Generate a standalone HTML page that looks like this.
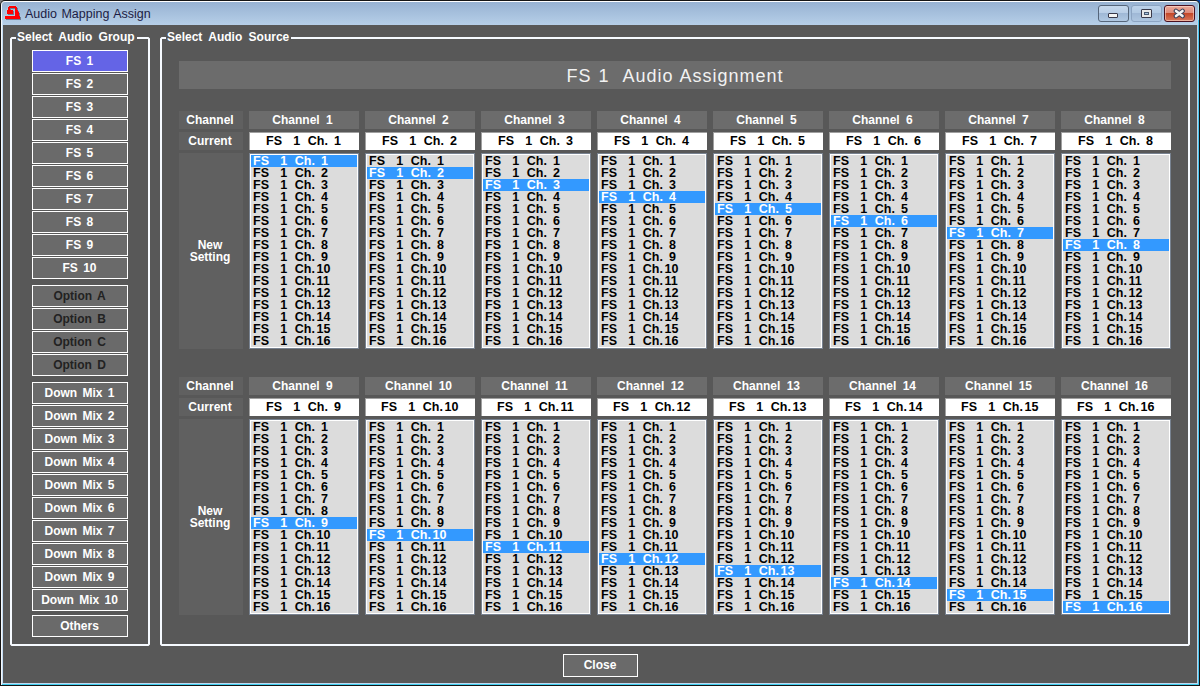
<!DOCTYPE html><html><head><meta charset="utf-8"><style>
*{box-sizing:border-box;margin:0;padding:0}
html,body{width:1200px;height:686px;overflow:hidden;background:#808080}
body{position:relative;font-family:"Liberation Sans",sans-serif}
.a{position:absolute}
#win{left:0;top:0;width:1200px;height:686px;background:#141414;border-radius:5px 5px 0 0}
#tb{left:1px;top:1px;width:1198px;height:24px;border-radius:4px 4px 0 0;border-top:1px solid #fff;border-left:1px solid #f8fbff;border-right:1px solid #a8e4f4;background:linear-gradient(#97b2d2,#b6cfe8);}
#frameL{left:1px;top:20px;width:2px;height:665px;background:linear-gradient(90deg,#f4f8fc 50%,#c4dcf4 50%)}
#frameR{left:1197px;top:20px;width:2px;height:665px;background:linear-gradient(90deg,#c4d4e4 50%,#44c4f0 50%)}
#frameB{left:2px;top:683px;width:1196px;height:2px;background:linear-gradient(#c0d8f0 50%,#40d0f0 50%)}
#content{left:3px;top:25px;width:1194px;height:658px;background:#585858}
.title{left:25px;top:6px;font-size:12.5px;word-spacing:1px;color:#1c1c44;line-height:16px;white-space:nowrap}
.gb{border:2px solid #fff;border-radius:3px}
.leg{font-weight:bold;word-spacing:3px;font-size:12px;color:#fff;line-height:14px;background:#585858;white-space:nowrap;padding:0 2px 0 1px}
.btn{left:32px;width:96px;word-spacing:2px;padding-right:1px;height:22px;border:1px solid #fff;background:#6a6a6a;color:#fff;font-weight:bold;font-size:12px;line-height:20px;text-align:center;white-space:pre}
.dis{color:#222}
.cell{padding-right:2px;word-spacing:2px;background:#606060;color:#fff;font-weight:bold;font-size:12px;text-align:center;white-space:pre}
.hdr{padding-right:3px;word-spacing:3px;background:#6c6c6c;color:#fff;font-weight:bold;font-size:12px;line-height:18px;text-align:center;white-space:pre}
.cur{background:#fff;border-left:1px solid #a0a0a0;border-top:1px solid #a0a0a0;color:#000;font-weight:bold;font-size:12.5px;line-height:12px;padding-top:2px;white-space:pre}
.list{background:#dcdcdc;border:1px solid #788290;box-shadow:inset 0 0 0 1px #fff;padding:1px}
.row{height:12px;line-height:12px;font-weight:bold;font-size:12.5px;color:#000;padding-left:2px;white-space:pre}
.p{display:inline-block;width:27.2px}.q{display:inline-block;width:14.6px}.r{display:inline-block;width:21.7px}.r1{display:inline-block;width:26.2px}
.row.s{background:#3399ff;color:#fff}
</style></head><body><div class="a" style="left:1192px;top:0;width:8px;height:8px;background:#0848a8"></div>
<div class="a" id="win"></div>
<div class="a" id="tb"></div>
<div class="a" id="frameL"></div><div class="a" id="frameR"></div><div class="a" id="frameB"></div>
<div class="a" id="content"></div>
<svg class="a" style="left:0;top:0" width="24" height="24" viewBox="0 0 24 24"><path d="M9,6 H16 V7 H17 V10 H18 V12 H19 V16 H20 V19 H5 V16 H15 V8 H10 V10 H13 V14 H7 V10 H8 V7 H9 Z" fill="#c8e4f4" transform="translate(-0.5,-0.5)" opacity="0.6"/><path d="M9,6 H16 V7 H17 V10 H18 V12 H19 V16 H20 V19 H5 V16 H15 V8 H10 V10 H13 V14 H7 V10 H8 V7 H9 Z" fill="#556070" transform="translate(1,1)" opacity="0.7"/><path d="M9,6 H16 V7 H17 V10 H18 V12 H19 V16 H20 V19 H5 V16 H15 V8 H10 V10 H13 V14 H7 V10 H8 V7 H9 Z" fill="#ff0000"/></svg>
<div class="a title">Audio Mapping Assign</div>
<div class="a" style="left:1098px;top:5px;width:31px;height:17px;border:1px solid #55657a;border-radius:3px;background:linear-gradient(#c6d8ec 0,#b8cde6 50%,#9fb8d6 50%,#b0c8e2 100%)"></div>
<div class="a" style="left:1108px;top:13px;width:10px;height:5px;border:1px solid #3a3a4a;border-radius:1px;background:#f4f4f4"></div>
<div class="a" style="left:1131px;top:5px;width:31px;height:17px;border:1px solid #8ca4c2;border-radius:3px;background:linear-gradient(#bcd2ea 0,#b0c8e2 50%,#9fb8d6 50%,#aec6e0 100%)"></div>
<div class="a" style="left:1141px;top:9px;width:11px;height:9px;border:1px solid #3a3a4a;border-radius:1px;background:#e8e8e8"></div>
<div class="a" style="left:1144px;top:12px;width:5px;height:3px;border:1px solid #4a5a70;background:#a8c4e0"></div>
<div class="a" style="left:1164px;top:5px;width:31px;height:17px;border:1px solid #4a1020;border-radius:3px;box-shadow:inset 0 0 0 1px rgba(255,225,215,.55);background:linear-gradient(#eaa898 0,#dc8878 50%,#c4482a 50%,#d8785c 100%)"></div>
<svg class="a" style="left:1173px;top:8px" width="13" height="11" viewBox="0 0 13 11"><path d="M3 3L9.5 8M9.5 3L3 8" stroke="#3a4058" stroke-width="4.6" stroke-linecap="round"/><path d="M3 3L9.5 8M9.5 3L3 8" stroke="#f4f4f4" stroke-width="2.6" stroke-linecap="round"/></svg>
<svg class="a" style="left:0;top:0" width="1200" height="686"><path d="M11.5,37H148.5L150,38.5V644.5L148.5,646H11.5L10,644.5V38.5ZM12,39V644H148V39ZM161.5,37H1188.5L1190,38.5V644.5L1188.5,646H161.5L160,644.5V38.5ZM162,39V644H1188V39Z" fill="#f6faff" fill-rule="evenodd"/></svg>
<div class="a leg" style="left:16px;top:30px">Select Audio Group</div>
<div class="a leg" style="left:166px;top:30px">Select Audio Source</div>
<div class="a btn " style="top:50px;background:#6464e6">FS 1</div>
<div class="a btn " style="top:73px">FS 2</div>
<div class="a btn " style="top:96px">FS 3</div>
<div class="a btn " style="top:119px">FS 4</div>
<div class="a btn " style="top:142px">FS 5</div>
<div class="a btn " style="top:165px">FS 6</div>
<div class="a btn " style="top:188px">FS 7</div>
<div class="a btn " style="top:211px">FS 8</div>
<div class="a btn " style="top:234px">FS 9</div>
<div class="a btn " style="top:257px">FS 10</div>
<div class="a btn dis" style="top:285px">Option A</div>
<div class="a btn dis" style="top:308px">Option B</div>
<div class="a btn dis" style="top:331px">Option C</div>
<div class="a btn dis" style="top:354px">Option D</div>
<div class="a btn " style="top:382px">Down Mix 1</div>
<div class="a btn " style="top:405px">Down Mix 2</div>
<div class="a btn " style="top:428px">Down Mix 3</div>
<div class="a btn " style="top:451px">Down Mix 4</div>
<div class="a btn " style="top:474px">Down Mix 5</div>
<div class="a btn " style="top:497px">Down Mix 6</div>
<div class="a btn " style="top:520px">Down Mix 7</div>
<div class="a btn " style="top:543px">Down Mix 8</div>
<div class="a btn " style="top:566px">Down Mix 9</div>
<div class="a btn " style="top:589px">Down Mix 10</div>
<div class="a btn " style="top:615px">Others</div>
<div class="a" style="left:179px;top:61px;width:992px;height:28px;background:#6c6c6c;color:#f2f2f2;font-size:18px;line-height:30px;letter-spacing:1px;word-spacing:1px;text-align:center;white-space:pre">FS 1  Audio Assignment</div>
<div class="a cell" style="left:179px;top:111px;width:64px;height:18px;line-height:18px">Channel</div>
<div class="a cell" style="left:179px;top:132px;width:64px;height:18px;line-height:18px">Current</div>
<div class="a cell" style="left:179px;top:153px;width:64px;height:196px;padding-top:86px;line-height:12px">New
Setting</div>
<div class="a hdr" style="left:249px;top:111px;width:110px;height:18px">Channel 1</div>
<div class="a cur" style="left:249px;top:132px;width:110px;height:18px;padding-left:16px"><span class=p>FS</span><span class=q>1</span><span class=r1>Ch.</span>1</div>
<div class="a list" style="left:249px;top:153px;width:110px;height:196px"><div class="row s"><span class=p>FS</span><span class=q>1</span><span class=r1>Ch.</span>1</div><div class="row"><span class=p>FS</span><span class=q>1</span><span class=r1>Ch.</span>2</div><div class="row"><span class=p>FS</span><span class=q>1</span><span class=r1>Ch.</span>3</div><div class="row"><span class=p>FS</span><span class=q>1</span><span class=r1>Ch.</span>4</div><div class="row"><span class=p>FS</span><span class=q>1</span><span class=r1>Ch.</span>5</div><div class="row"><span class=p>FS</span><span class=q>1</span><span class=r1>Ch.</span>6</div><div class="row"><span class=p>FS</span><span class=q>1</span><span class=r1>Ch.</span>7</div><div class="row"><span class=p>FS</span><span class=q>1</span><span class=r1>Ch.</span>8</div><div class="row"><span class=p>FS</span><span class=q>1</span><span class=r1>Ch.</span>9</div><div class="row"><span class=p>FS</span><span class=q>1</span><span class=r>Ch.</span>10</div><div class="row"><span class=p>FS</span><span class=q>1</span><span class=r>Ch.</span>11</div><div class="row"><span class=p>FS</span><span class=q>1</span><span class=r>Ch.</span>12</div><div class="row"><span class=p>FS</span><span class=q>1</span><span class=r>Ch.</span>13</div><div class="row"><span class=p>FS</span><span class=q>1</span><span class=r>Ch.</span>14</div><div class="row"><span class=p>FS</span><span class=q>1</span><span class=r>Ch.</span>15</div><div class="row"><span class=p>FS</span><span class=q>1</span><span class=r>Ch.</span>16</div></div>
<div class="a hdr" style="left:365px;top:111px;width:110px;height:18px">Channel 2</div>
<div class="a cur" style="left:365px;top:132px;width:110px;height:18px;padding-left:16px"><span class=p>FS</span><span class=q>1</span><span class=r1>Ch.</span>2</div>
<div class="a list" style="left:365px;top:153px;width:110px;height:196px"><div class="row"><span class=p>FS</span><span class=q>1</span><span class=r1>Ch.</span>1</div><div class="row s"><span class=p>FS</span><span class=q>1</span><span class=r1>Ch.</span>2</div><div class="row"><span class=p>FS</span><span class=q>1</span><span class=r1>Ch.</span>3</div><div class="row"><span class=p>FS</span><span class=q>1</span><span class=r1>Ch.</span>4</div><div class="row"><span class=p>FS</span><span class=q>1</span><span class=r1>Ch.</span>5</div><div class="row"><span class=p>FS</span><span class=q>1</span><span class=r1>Ch.</span>6</div><div class="row"><span class=p>FS</span><span class=q>1</span><span class=r1>Ch.</span>7</div><div class="row"><span class=p>FS</span><span class=q>1</span><span class=r1>Ch.</span>8</div><div class="row"><span class=p>FS</span><span class=q>1</span><span class=r1>Ch.</span>9</div><div class="row"><span class=p>FS</span><span class=q>1</span><span class=r>Ch.</span>10</div><div class="row"><span class=p>FS</span><span class=q>1</span><span class=r>Ch.</span>11</div><div class="row"><span class=p>FS</span><span class=q>1</span><span class=r>Ch.</span>12</div><div class="row"><span class=p>FS</span><span class=q>1</span><span class=r>Ch.</span>13</div><div class="row"><span class=p>FS</span><span class=q>1</span><span class=r>Ch.</span>14</div><div class="row"><span class=p>FS</span><span class=q>1</span><span class=r>Ch.</span>15</div><div class="row"><span class=p>FS</span><span class=q>1</span><span class=r>Ch.</span>16</div></div>
<div class="a hdr" style="left:481px;top:111px;width:110px;height:18px">Channel 3</div>
<div class="a cur" style="left:481px;top:132px;width:110px;height:18px;padding-left:16px"><span class=p>FS</span><span class=q>1</span><span class=r1>Ch.</span>3</div>
<div class="a list" style="left:481px;top:153px;width:110px;height:196px"><div class="row"><span class=p>FS</span><span class=q>1</span><span class=r1>Ch.</span>1</div><div class="row"><span class=p>FS</span><span class=q>1</span><span class=r1>Ch.</span>2</div><div class="row s"><span class=p>FS</span><span class=q>1</span><span class=r1>Ch.</span>3</div><div class="row"><span class=p>FS</span><span class=q>1</span><span class=r1>Ch.</span>4</div><div class="row"><span class=p>FS</span><span class=q>1</span><span class=r1>Ch.</span>5</div><div class="row"><span class=p>FS</span><span class=q>1</span><span class=r1>Ch.</span>6</div><div class="row"><span class=p>FS</span><span class=q>1</span><span class=r1>Ch.</span>7</div><div class="row"><span class=p>FS</span><span class=q>1</span><span class=r1>Ch.</span>8</div><div class="row"><span class=p>FS</span><span class=q>1</span><span class=r1>Ch.</span>9</div><div class="row"><span class=p>FS</span><span class=q>1</span><span class=r>Ch.</span>10</div><div class="row"><span class=p>FS</span><span class=q>1</span><span class=r>Ch.</span>11</div><div class="row"><span class=p>FS</span><span class=q>1</span><span class=r>Ch.</span>12</div><div class="row"><span class=p>FS</span><span class=q>1</span><span class=r>Ch.</span>13</div><div class="row"><span class=p>FS</span><span class=q>1</span><span class=r>Ch.</span>14</div><div class="row"><span class=p>FS</span><span class=q>1</span><span class=r>Ch.</span>15</div><div class="row"><span class=p>FS</span><span class=q>1</span><span class=r>Ch.</span>16</div></div>
<div class="a hdr" style="left:597px;top:111px;width:110px;height:18px">Channel 4</div>
<div class="a cur" style="left:597px;top:132px;width:110px;height:18px;padding-left:16px"><span class=p>FS</span><span class=q>1</span><span class=r1>Ch.</span>4</div>
<div class="a list" style="left:597px;top:153px;width:110px;height:196px"><div class="row"><span class=p>FS</span><span class=q>1</span><span class=r1>Ch.</span>1</div><div class="row"><span class=p>FS</span><span class=q>1</span><span class=r1>Ch.</span>2</div><div class="row"><span class=p>FS</span><span class=q>1</span><span class=r1>Ch.</span>3</div><div class="row s"><span class=p>FS</span><span class=q>1</span><span class=r1>Ch.</span>4</div><div class="row"><span class=p>FS</span><span class=q>1</span><span class=r1>Ch.</span>5</div><div class="row"><span class=p>FS</span><span class=q>1</span><span class=r1>Ch.</span>6</div><div class="row"><span class=p>FS</span><span class=q>1</span><span class=r1>Ch.</span>7</div><div class="row"><span class=p>FS</span><span class=q>1</span><span class=r1>Ch.</span>8</div><div class="row"><span class=p>FS</span><span class=q>1</span><span class=r1>Ch.</span>9</div><div class="row"><span class=p>FS</span><span class=q>1</span><span class=r>Ch.</span>10</div><div class="row"><span class=p>FS</span><span class=q>1</span><span class=r>Ch.</span>11</div><div class="row"><span class=p>FS</span><span class=q>1</span><span class=r>Ch.</span>12</div><div class="row"><span class=p>FS</span><span class=q>1</span><span class=r>Ch.</span>13</div><div class="row"><span class=p>FS</span><span class=q>1</span><span class=r>Ch.</span>14</div><div class="row"><span class=p>FS</span><span class=q>1</span><span class=r>Ch.</span>15</div><div class="row"><span class=p>FS</span><span class=q>1</span><span class=r>Ch.</span>16</div></div>
<div class="a hdr" style="left:713px;top:111px;width:110px;height:18px">Channel 5</div>
<div class="a cur" style="left:713px;top:132px;width:110px;height:18px;padding-left:16px"><span class=p>FS</span><span class=q>1</span><span class=r1>Ch.</span>5</div>
<div class="a list" style="left:713px;top:153px;width:110px;height:196px"><div class="row"><span class=p>FS</span><span class=q>1</span><span class=r1>Ch.</span>1</div><div class="row"><span class=p>FS</span><span class=q>1</span><span class=r1>Ch.</span>2</div><div class="row"><span class=p>FS</span><span class=q>1</span><span class=r1>Ch.</span>3</div><div class="row"><span class=p>FS</span><span class=q>1</span><span class=r1>Ch.</span>4</div><div class="row s"><span class=p>FS</span><span class=q>1</span><span class=r1>Ch.</span>5</div><div class="row"><span class=p>FS</span><span class=q>1</span><span class=r1>Ch.</span>6</div><div class="row"><span class=p>FS</span><span class=q>1</span><span class=r1>Ch.</span>7</div><div class="row"><span class=p>FS</span><span class=q>1</span><span class=r1>Ch.</span>8</div><div class="row"><span class=p>FS</span><span class=q>1</span><span class=r1>Ch.</span>9</div><div class="row"><span class=p>FS</span><span class=q>1</span><span class=r>Ch.</span>10</div><div class="row"><span class=p>FS</span><span class=q>1</span><span class=r>Ch.</span>11</div><div class="row"><span class=p>FS</span><span class=q>1</span><span class=r>Ch.</span>12</div><div class="row"><span class=p>FS</span><span class=q>1</span><span class=r>Ch.</span>13</div><div class="row"><span class=p>FS</span><span class=q>1</span><span class=r>Ch.</span>14</div><div class="row"><span class=p>FS</span><span class=q>1</span><span class=r>Ch.</span>15</div><div class="row"><span class=p>FS</span><span class=q>1</span><span class=r>Ch.</span>16</div></div>
<div class="a hdr" style="left:829px;top:111px;width:110px;height:18px">Channel 6</div>
<div class="a cur" style="left:829px;top:132px;width:110px;height:18px;padding-left:16px"><span class=p>FS</span><span class=q>1</span><span class=r1>Ch.</span>6</div>
<div class="a list" style="left:829px;top:153px;width:110px;height:196px"><div class="row"><span class=p>FS</span><span class=q>1</span><span class=r1>Ch.</span>1</div><div class="row"><span class=p>FS</span><span class=q>1</span><span class=r1>Ch.</span>2</div><div class="row"><span class=p>FS</span><span class=q>1</span><span class=r1>Ch.</span>3</div><div class="row"><span class=p>FS</span><span class=q>1</span><span class=r1>Ch.</span>4</div><div class="row"><span class=p>FS</span><span class=q>1</span><span class=r1>Ch.</span>5</div><div class="row s"><span class=p>FS</span><span class=q>1</span><span class=r1>Ch.</span>6</div><div class="row"><span class=p>FS</span><span class=q>1</span><span class=r1>Ch.</span>7</div><div class="row"><span class=p>FS</span><span class=q>1</span><span class=r1>Ch.</span>8</div><div class="row"><span class=p>FS</span><span class=q>1</span><span class=r1>Ch.</span>9</div><div class="row"><span class=p>FS</span><span class=q>1</span><span class=r>Ch.</span>10</div><div class="row"><span class=p>FS</span><span class=q>1</span><span class=r>Ch.</span>11</div><div class="row"><span class=p>FS</span><span class=q>1</span><span class=r>Ch.</span>12</div><div class="row"><span class=p>FS</span><span class=q>1</span><span class=r>Ch.</span>13</div><div class="row"><span class=p>FS</span><span class=q>1</span><span class=r>Ch.</span>14</div><div class="row"><span class=p>FS</span><span class=q>1</span><span class=r>Ch.</span>15</div><div class="row"><span class=p>FS</span><span class=q>1</span><span class=r>Ch.</span>16</div></div>
<div class="a hdr" style="left:945px;top:111px;width:110px;height:18px">Channel 7</div>
<div class="a cur" style="left:945px;top:132px;width:110px;height:18px;padding-left:16px"><span class=p>FS</span><span class=q>1</span><span class=r1>Ch.</span>7</div>
<div class="a list" style="left:945px;top:153px;width:110px;height:196px"><div class="row"><span class=p>FS</span><span class=q>1</span><span class=r1>Ch.</span>1</div><div class="row"><span class=p>FS</span><span class=q>1</span><span class=r1>Ch.</span>2</div><div class="row"><span class=p>FS</span><span class=q>1</span><span class=r1>Ch.</span>3</div><div class="row"><span class=p>FS</span><span class=q>1</span><span class=r1>Ch.</span>4</div><div class="row"><span class=p>FS</span><span class=q>1</span><span class=r1>Ch.</span>5</div><div class="row"><span class=p>FS</span><span class=q>1</span><span class=r1>Ch.</span>6</div><div class="row s"><span class=p>FS</span><span class=q>1</span><span class=r1>Ch.</span>7</div><div class="row"><span class=p>FS</span><span class=q>1</span><span class=r1>Ch.</span>8</div><div class="row"><span class=p>FS</span><span class=q>1</span><span class=r1>Ch.</span>9</div><div class="row"><span class=p>FS</span><span class=q>1</span><span class=r>Ch.</span>10</div><div class="row"><span class=p>FS</span><span class=q>1</span><span class=r>Ch.</span>11</div><div class="row"><span class=p>FS</span><span class=q>1</span><span class=r>Ch.</span>12</div><div class="row"><span class=p>FS</span><span class=q>1</span><span class=r>Ch.</span>13</div><div class="row"><span class=p>FS</span><span class=q>1</span><span class=r>Ch.</span>14</div><div class="row"><span class=p>FS</span><span class=q>1</span><span class=r>Ch.</span>15</div><div class="row"><span class=p>FS</span><span class=q>1</span><span class=r>Ch.</span>16</div></div>
<div class="a hdr" style="left:1061px;top:111px;width:110px;height:18px">Channel 8</div>
<div class="a cur" style="left:1061px;top:132px;width:110px;height:18px;padding-left:16px"><span class=p>FS</span><span class=q>1</span><span class=r1>Ch.</span>8</div>
<div class="a list" style="left:1061px;top:153px;width:110px;height:196px"><div class="row"><span class=p>FS</span><span class=q>1</span><span class=r1>Ch.</span>1</div><div class="row"><span class=p>FS</span><span class=q>1</span><span class=r1>Ch.</span>2</div><div class="row"><span class=p>FS</span><span class=q>1</span><span class=r1>Ch.</span>3</div><div class="row"><span class=p>FS</span><span class=q>1</span><span class=r1>Ch.</span>4</div><div class="row"><span class=p>FS</span><span class=q>1</span><span class=r1>Ch.</span>5</div><div class="row"><span class=p>FS</span><span class=q>1</span><span class=r1>Ch.</span>6</div><div class="row"><span class=p>FS</span><span class=q>1</span><span class=r1>Ch.</span>7</div><div class="row s"><span class=p>FS</span><span class=q>1</span><span class=r1>Ch.</span>8</div><div class="row"><span class=p>FS</span><span class=q>1</span><span class=r1>Ch.</span>9</div><div class="row"><span class=p>FS</span><span class=q>1</span><span class=r>Ch.</span>10</div><div class="row"><span class=p>FS</span><span class=q>1</span><span class=r>Ch.</span>11</div><div class="row"><span class=p>FS</span><span class=q>1</span><span class=r>Ch.</span>12</div><div class="row"><span class=p>FS</span><span class=q>1</span><span class=r>Ch.</span>13</div><div class="row"><span class=p>FS</span><span class=q>1</span><span class=r>Ch.</span>14</div><div class="row"><span class=p>FS</span><span class=q>1</span><span class=r>Ch.</span>15</div><div class="row"><span class=p>FS</span><span class=q>1</span><span class=r>Ch.</span>16</div></div>
<div class="a cell" style="left:179px;top:377px;width:64px;height:18px;line-height:18px">Channel</div>
<div class="a cell" style="left:179px;top:398px;width:64px;height:18px;line-height:18px">Current</div>
<div class="a cell" style="left:179px;top:419px;width:64px;height:196px;padding-top:86px;line-height:12px">New
Setting</div>
<div class="a hdr" style="left:249px;top:377px;width:110px;height:18px">Channel 9</div>
<div class="a cur" style="left:249px;top:398px;width:110px;height:18px;padding-left:16px"><span class=p>FS</span><span class=q>1</span><span class=r1>Ch.</span>9</div>
<div class="a list" style="left:249px;top:419px;width:110px;height:196px"><div class="row"><span class=p>FS</span><span class=q>1</span><span class=r1>Ch.</span>1</div><div class="row"><span class=p>FS</span><span class=q>1</span><span class=r1>Ch.</span>2</div><div class="row"><span class=p>FS</span><span class=q>1</span><span class=r1>Ch.</span>3</div><div class="row"><span class=p>FS</span><span class=q>1</span><span class=r1>Ch.</span>4</div><div class="row"><span class=p>FS</span><span class=q>1</span><span class=r1>Ch.</span>5</div><div class="row"><span class=p>FS</span><span class=q>1</span><span class=r1>Ch.</span>6</div><div class="row"><span class=p>FS</span><span class=q>1</span><span class=r1>Ch.</span>7</div><div class="row"><span class=p>FS</span><span class=q>1</span><span class=r1>Ch.</span>8</div><div class="row s"><span class=p>FS</span><span class=q>1</span><span class=r1>Ch.</span>9</div><div class="row"><span class=p>FS</span><span class=q>1</span><span class=r>Ch.</span>10</div><div class="row"><span class=p>FS</span><span class=q>1</span><span class=r>Ch.</span>11</div><div class="row"><span class=p>FS</span><span class=q>1</span><span class=r>Ch.</span>12</div><div class="row"><span class=p>FS</span><span class=q>1</span><span class=r>Ch.</span>13</div><div class="row"><span class=p>FS</span><span class=q>1</span><span class=r>Ch.</span>14</div><div class="row"><span class=p>FS</span><span class=q>1</span><span class=r>Ch.</span>15</div><div class="row"><span class=p>FS</span><span class=q>1</span><span class=r>Ch.</span>16</div></div>
<div class="a hdr" style="left:365px;top:377px;width:110px;height:18px">Channel 10</div>
<div class="a cur" style="left:365px;top:398px;width:110px;height:18px;padding-left:15px"><span class=p>FS</span><span class=q>1</span><span class=r>Ch.</span>10</div>
<div class="a list" style="left:365px;top:419px;width:110px;height:196px"><div class="row"><span class=p>FS</span><span class=q>1</span><span class=r1>Ch.</span>1</div><div class="row"><span class=p>FS</span><span class=q>1</span><span class=r1>Ch.</span>2</div><div class="row"><span class=p>FS</span><span class=q>1</span><span class=r1>Ch.</span>3</div><div class="row"><span class=p>FS</span><span class=q>1</span><span class=r1>Ch.</span>4</div><div class="row"><span class=p>FS</span><span class=q>1</span><span class=r1>Ch.</span>5</div><div class="row"><span class=p>FS</span><span class=q>1</span><span class=r1>Ch.</span>6</div><div class="row"><span class=p>FS</span><span class=q>1</span><span class=r1>Ch.</span>7</div><div class="row"><span class=p>FS</span><span class=q>1</span><span class=r1>Ch.</span>8</div><div class="row"><span class=p>FS</span><span class=q>1</span><span class=r1>Ch.</span>9</div><div class="row s"><span class=p>FS</span><span class=q>1</span><span class=r>Ch.</span>10</div><div class="row"><span class=p>FS</span><span class=q>1</span><span class=r>Ch.</span>11</div><div class="row"><span class=p>FS</span><span class=q>1</span><span class=r>Ch.</span>12</div><div class="row"><span class=p>FS</span><span class=q>1</span><span class=r>Ch.</span>13</div><div class="row"><span class=p>FS</span><span class=q>1</span><span class=r>Ch.</span>14</div><div class="row"><span class=p>FS</span><span class=q>1</span><span class=r>Ch.</span>15</div><div class="row"><span class=p>FS</span><span class=q>1</span><span class=r>Ch.</span>16</div></div>
<div class="a hdr" style="left:481px;top:377px;width:110px;height:18px">Channel 11</div>
<div class="a cur" style="left:481px;top:398px;width:110px;height:18px;padding-left:15px"><span class=p>FS</span><span class=q>1</span><span class=r>Ch.</span>11</div>
<div class="a list" style="left:481px;top:419px;width:110px;height:196px"><div class="row"><span class=p>FS</span><span class=q>1</span><span class=r1>Ch.</span>1</div><div class="row"><span class=p>FS</span><span class=q>1</span><span class=r1>Ch.</span>2</div><div class="row"><span class=p>FS</span><span class=q>1</span><span class=r1>Ch.</span>3</div><div class="row"><span class=p>FS</span><span class=q>1</span><span class=r1>Ch.</span>4</div><div class="row"><span class=p>FS</span><span class=q>1</span><span class=r1>Ch.</span>5</div><div class="row"><span class=p>FS</span><span class=q>1</span><span class=r1>Ch.</span>6</div><div class="row"><span class=p>FS</span><span class=q>1</span><span class=r1>Ch.</span>7</div><div class="row"><span class=p>FS</span><span class=q>1</span><span class=r1>Ch.</span>8</div><div class="row"><span class=p>FS</span><span class=q>1</span><span class=r1>Ch.</span>9</div><div class="row"><span class=p>FS</span><span class=q>1</span><span class=r>Ch.</span>10</div><div class="row s"><span class=p>FS</span><span class=q>1</span><span class=r>Ch.</span>11</div><div class="row"><span class=p>FS</span><span class=q>1</span><span class=r>Ch.</span>12</div><div class="row"><span class=p>FS</span><span class=q>1</span><span class=r>Ch.</span>13</div><div class="row"><span class=p>FS</span><span class=q>1</span><span class=r>Ch.</span>14</div><div class="row"><span class=p>FS</span><span class=q>1</span><span class=r>Ch.</span>15</div><div class="row"><span class=p>FS</span><span class=q>1</span><span class=r>Ch.</span>16</div></div>
<div class="a hdr" style="left:597px;top:377px;width:110px;height:18px">Channel 12</div>
<div class="a cur" style="left:597px;top:398px;width:110px;height:18px;padding-left:15px"><span class=p>FS</span><span class=q>1</span><span class=r>Ch.</span>12</div>
<div class="a list" style="left:597px;top:419px;width:110px;height:196px"><div class="row"><span class=p>FS</span><span class=q>1</span><span class=r1>Ch.</span>1</div><div class="row"><span class=p>FS</span><span class=q>1</span><span class=r1>Ch.</span>2</div><div class="row"><span class=p>FS</span><span class=q>1</span><span class=r1>Ch.</span>3</div><div class="row"><span class=p>FS</span><span class=q>1</span><span class=r1>Ch.</span>4</div><div class="row"><span class=p>FS</span><span class=q>1</span><span class=r1>Ch.</span>5</div><div class="row"><span class=p>FS</span><span class=q>1</span><span class=r1>Ch.</span>6</div><div class="row"><span class=p>FS</span><span class=q>1</span><span class=r1>Ch.</span>7</div><div class="row"><span class=p>FS</span><span class=q>1</span><span class=r1>Ch.</span>8</div><div class="row"><span class=p>FS</span><span class=q>1</span><span class=r1>Ch.</span>9</div><div class="row"><span class=p>FS</span><span class=q>1</span><span class=r>Ch.</span>10</div><div class="row"><span class=p>FS</span><span class=q>1</span><span class=r>Ch.</span>11</div><div class="row s"><span class=p>FS</span><span class=q>1</span><span class=r>Ch.</span>12</div><div class="row"><span class=p>FS</span><span class=q>1</span><span class=r>Ch.</span>13</div><div class="row"><span class=p>FS</span><span class=q>1</span><span class=r>Ch.</span>14</div><div class="row"><span class=p>FS</span><span class=q>1</span><span class=r>Ch.</span>15</div><div class="row"><span class=p>FS</span><span class=q>1</span><span class=r>Ch.</span>16</div></div>
<div class="a hdr" style="left:713px;top:377px;width:110px;height:18px">Channel 13</div>
<div class="a cur" style="left:713px;top:398px;width:110px;height:18px;padding-left:15px"><span class=p>FS</span><span class=q>1</span><span class=r>Ch.</span>13</div>
<div class="a list" style="left:713px;top:419px;width:110px;height:196px"><div class="row"><span class=p>FS</span><span class=q>1</span><span class=r1>Ch.</span>1</div><div class="row"><span class=p>FS</span><span class=q>1</span><span class=r1>Ch.</span>2</div><div class="row"><span class=p>FS</span><span class=q>1</span><span class=r1>Ch.</span>3</div><div class="row"><span class=p>FS</span><span class=q>1</span><span class=r1>Ch.</span>4</div><div class="row"><span class=p>FS</span><span class=q>1</span><span class=r1>Ch.</span>5</div><div class="row"><span class=p>FS</span><span class=q>1</span><span class=r1>Ch.</span>6</div><div class="row"><span class=p>FS</span><span class=q>1</span><span class=r1>Ch.</span>7</div><div class="row"><span class=p>FS</span><span class=q>1</span><span class=r1>Ch.</span>8</div><div class="row"><span class=p>FS</span><span class=q>1</span><span class=r1>Ch.</span>9</div><div class="row"><span class=p>FS</span><span class=q>1</span><span class=r>Ch.</span>10</div><div class="row"><span class=p>FS</span><span class=q>1</span><span class=r>Ch.</span>11</div><div class="row"><span class=p>FS</span><span class=q>1</span><span class=r>Ch.</span>12</div><div class="row s"><span class=p>FS</span><span class=q>1</span><span class=r>Ch.</span>13</div><div class="row"><span class=p>FS</span><span class=q>1</span><span class=r>Ch.</span>14</div><div class="row"><span class=p>FS</span><span class=q>1</span><span class=r>Ch.</span>15</div><div class="row"><span class=p>FS</span><span class=q>1</span><span class=r>Ch.</span>16</div></div>
<div class="a hdr" style="left:829px;top:377px;width:110px;height:18px">Channel 14</div>
<div class="a cur" style="left:829px;top:398px;width:110px;height:18px;padding-left:15px"><span class=p>FS</span><span class=q>1</span><span class=r>Ch.</span>14</div>
<div class="a list" style="left:829px;top:419px;width:110px;height:196px"><div class="row"><span class=p>FS</span><span class=q>1</span><span class=r1>Ch.</span>1</div><div class="row"><span class=p>FS</span><span class=q>1</span><span class=r1>Ch.</span>2</div><div class="row"><span class=p>FS</span><span class=q>1</span><span class=r1>Ch.</span>3</div><div class="row"><span class=p>FS</span><span class=q>1</span><span class=r1>Ch.</span>4</div><div class="row"><span class=p>FS</span><span class=q>1</span><span class=r1>Ch.</span>5</div><div class="row"><span class=p>FS</span><span class=q>1</span><span class=r1>Ch.</span>6</div><div class="row"><span class=p>FS</span><span class=q>1</span><span class=r1>Ch.</span>7</div><div class="row"><span class=p>FS</span><span class=q>1</span><span class=r1>Ch.</span>8</div><div class="row"><span class=p>FS</span><span class=q>1</span><span class=r1>Ch.</span>9</div><div class="row"><span class=p>FS</span><span class=q>1</span><span class=r>Ch.</span>10</div><div class="row"><span class=p>FS</span><span class=q>1</span><span class=r>Ch.</span>11</div><div class="row"><span class=p>FS</span><span class=q>1</span><span class=r>Ch.</span>12</div><div class="row"><span class=p>FS</span><span class=q>1</span><span class=r>Ch.</span>13</div><div class="row s"><span class=p>FS</span><span class=q>1</span><span class=r>Ch.</span>14</div><div class="row"><span class=p>FS</span><span class=q>1</span><span class=r>Ch.</span>15</div><div class="row"><span class=p>FS</span><span class=q>1</span><span class=r>Ch.</span>16</div></div>
<div class="a hdr" style="left:945px;top:377px;width:110px;height:18px">Channel 15</div>
<div class="a cur" style="left:945px;top:398px;width:110px;height:18px;padding-left:15px"><span class=p>FS</span><span class=q>1</span><span class=r>Ch.</span>15</div>
<div class="a list" style="left:945px;top:419px;width:110px;height:196px"><div class="row"><span class=p>FS</span><span class=q>1</span><span class=r1>Ch.</span>1</div><div class="row"><span class=p>FS</span><span class=q>1</span><span class=r1>Ch.</span>2</div><div class="row"><span class=p>FS</span><span class=q>1</span><span class=r1>Ch.</span>3</div><div class="row"><span class=p>FS</span><span class=q>1</span><span class=r1>Ch.</span>4</div><div class="row"><span class=p>FS</span><span class=q>1</span><span class=r1>Ch.</span>5</div><div class="row"><span class=p>FS</span><span class=q>1</span><span class=r1>Ch.</span>6</div><div class="row"><span class=p>FS</span><span class=q>1</span><span class=r1>Ch.</span>7</div><div class="row"><span class=p>FS</span><span class=q>1</span><span class=r1>Ch.</span>8</div><div class="row"><span class=p>FS</span><span class=q>1</span><span class=r1>Ch.</span>9</div><div class="row"><span class=p>FS</span><span class=q>1</span><span class=r>Ch.</span>10</div><div class="row"><span class=p>FS</span><span class=q>1</span><span class=r>Ch.</span>11</div><div class="row"><span class=p>FS</span><span class=q>1</span><span class=r>Ch.</span>12</div><div class="row"><span class=p>FS</span><span class=q>1</span><span class=r>Ch.</span>13</div><div class="row"><span class=p>FS</span><span class=q>1</span><span class=r>Ch.</span>14</div><div class="row s"><span class=p>FS</span><span class=q>1</span><span class=r>Ch.</span>15</div><div class="row"><span class=p>FS</span><span class=q>1</span><span class=r>Ch.</span>16</div></div>
<div class="a hdr" style="left:1061px;top:377px;width:110px;height:18px">Channel 16</div>
<div class="a cur" style="left:1061px;top:398px;width:110px;height:18px;padding-left:15px"><span class=p>FS</span><span class=q>1</span><span class=r>Ch.</span>16</div>
<div class="a list" style="left:1061px;top:419px;width:110px;height:196px"><div class="row"><span class=p>FS</span><span class=q>1</span><span class=r1>Ch.</span>1</div><div class="row"><span class=p>FS</span><span class=q>1</span><span class=r1>Ch.</span>2</div><div class="row"><span class=p>FS</span><span class=q>1</span><span class=r1>Ch.</span>3</div><div class="row"><span class=p>FS</span><span class=q>1</span><span class=r1>Ch.</span>4</div><div class="row"><span class=p>FS</span><span class=q>1</span><span class=r1>Ch.</span>5</div><div class="row"><span class=p>FS</span><span class=q>1</span><span class=r1>Ch.</span>6</div><div class="row"><span class=p>FS</span><span class=q>1</span><span class=r1>Ch.</span>7</div><div class="row"><span class=p>FS</span><span class=q>1</span><span class=r1>Ch.</span>8</div><div class="row"><span class=p>FS</span><span class=q>1</span><span class=r1>Ch.</span>9</div><div class="row"><span class=p>FS</span><span class=q>1</span><span class=r>Ch.</span>10</div><div class="row"><span class=p>FS</span><span class=q>1</span><span class=r>Ch.</span>11</div><div class="row"><span class=p>FS</span><span class=q>1</span><span class=r>Ch.</span>12</div><div class="row"><span class=p>FS</span><span class=q>1</span><span class=r>Ch.</span>13</div><div class="row"><span class=p>FS</span><span class=q>1</span><span class=r>Ch.</span>14</div><div class="row"><span class=p>FS</span><span class=q>1</span><span class=r>Ch.</span>15</div><div class="row s"><span class=p>FS</span><span class=q>1</span><span class=r>Ch.</span>16</div></div>
<div class="a btn" style="left:563px;top:654px;width:75px;height:23px;line-height:21px;padding-right:1px">Close</div></body></html>
